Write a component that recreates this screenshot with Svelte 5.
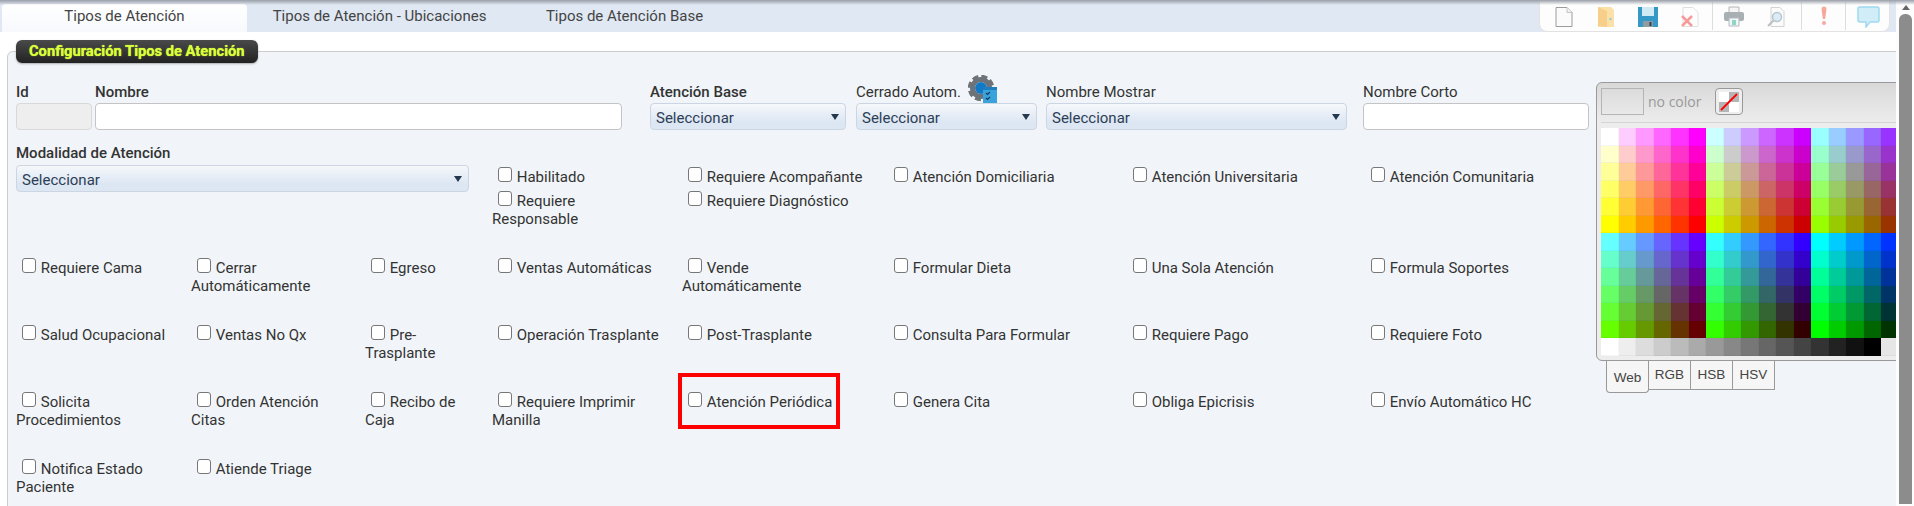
<script>
	const tabs = ['Tipos de Atención', 'Tipos de Atención - Ubicaciones', 'Tipos de Atención Base'];

	// one entry per table cell; \n marks where the label breaks
	const rows = [
		['Requiere Cama', 'Cerrar\nAutomáticamente', 'Egreso', 'Ventas Automáticas', 'Vende\nAutomáticamente', 'Formular Dieta', 'Una Sola Atención', 'Formula Soportes'],
		['Salud Ocupacional', 'Ventas No Qx', 'Pre-\nTrasplante', 'Operación Trasplante', 'Post-Trasplante', 'Consulta Para Formular', 'Requiere Pago', 'Requiere Foto'],
		['Solicita\nProcedimientos', 'Orden Atención\nCitas', 'Recibo de\nCaja', 'Requiere Imprimir\nManilla', 'Atención Periódica', 'Genera Cita', 'Obliga Epicrisis', 'Envío Automático HC'],
		['Notifica Estado\nPaciente', 'Atiende Triage']
	];

	const firstRow = [
		['Habilitado', 'Requiere\nResponsable'],
		['Requiere Acompañante', 'Requiere Diagnóstico'],
		['Atención Domiciliaria'],
		['Atención Universitaria'],
		['Atención Comunitaria']
	];

	const hex = ['ff', 'cc', '99', '66', '33', '00'];
	const swatches = [];
	for (const reds of [['ff', 'cc', '99'], ['66', '33', '00']]) {
		for (const b of hex) {
			for (const r of reds) {
				for (const g of hex) swatches.push('#' + r + g + b);
			}
		}
	}
	const grays = ['#ffffff', '#eeeeee', '#dddddd', '#cccccc', '#bbbbbb', '#aaaaaa', '#999999', '#888888', '#777777', '#666666', '#555555', '#444444', '#333333', '#222222', '#111111', '#000000', '#e6e6e6', '#e6e6e6'];
</script>

{#snippet check(text)}
	<label class="check" class:marked={text === 'Atención Periódica'}><input type="checkbox" /> {text}</label>
{/snippet}

{#snippet dropdown()}
	<div class="select"><span>Seleccionar</span></div>
{/snippet}

<div class="page">
	<div class="content">
		<div class="topbar">
			<div class="tabs">
				{#each tabs as tab, i}
					<div class="tab" class:active={i === 0}>{tab}</div>
				{/each}
			</div>
			<div class="toolbar">
				<span class="tool">
					<svg width="24" height="24" viewBox="0 0 24 24"><path d="M4 3.500h11l5 5v14H4z" fill="#fbfbfb" stroke="#8a8a8a" /><path d="M15 3.500v5h5" fill="#eee" stroke="#bbb" /></svg>
				</span>
				<span class="tool">
					<svg width="24" height="24" viewBox="0 0 24 24"><path d="M4 3h13l3 3v17H4z" fill="#fbdc9a" /><path d="M4 3l9 4v16l-9-1z" fill="#f6c877" /><circle cx="16.500" cy="15" r="1.300" fill="#8fc6c9" /></svg>
				</span>
				<span class="tool">
					<svg width="24" height="24" viewBox="0 0 24 24"><path d="M2 3h20v20H2z" fill="#1487bd" /><path d="M6 3h12v9H6z" fill="#c9e9f2" /><path d="M7 17h10v6H7z" fill="#7d8a93" /><path d="M13.500 18h2v4h-2z" fill="#123" /></svg>
				</span>
				<span class="tool">
					<svg width="24" height="24" viewBox="0 0 24 24"><path d="M5 3.500h10l5 5v14H5z" fill="#fdfdfd" stroke="#ddd" /><path d="M4 12l10 10M14 12L4 22" stroke="#f58a8a" stroke-width="2.500" /></svg>
				</span>
				<span class="sep"></span>
				<span class="tool">
					<svg width="24" height="24" viewBox="0 0 24 24"><path d="M7 3h10v6H7z" fill="#f4f4f4" stroke="#aaa" /><rect x="2" y="8" width="20" height="9" rx="2" fill="#9aa3a8" /><path d="M7 14h10v8H7z" fill="#eef6f6" stroke="#aab" /><path d="M10 16h4v5h-4z" fill="#7ecdb8" /></svg>
				</span>
				<span class="tool">
					<svg width="24" height="24" viewBox="0 0 24 24"><path d="M7 3.500h9l4 4v15H7z" fill="#fbfbfb" stroke="#ccc" /><circle cx="13" cy="13" r="4.500" fill="#d6eaf5" stroke="#a9bcc6" stroke-width="1.500" /><path d="M9.500 16.500L4 22" stroke="#b5b5b5" stroke-width="2" /></svg>
				</span>
				<span class="sep wide"></span>
				<span class="tool">
					<svg width="24" height="24" viewBox="0 0 24 24"><path d="M9.500 5a2.500 2.500 0 0 1 5 0L13.200 15h-2.400z" fill="#f69a8c" /><circle cx="12" cy="19" r="2" fill="#f69a8c" /></svg>
				</span>
				<span class="sep narrow"></span>
				<span class="tool">
					<svg width="24" height="24" viewBox="0 0 24 24"><path d="M4 3h17a2 2 0 0 1 2 2v11a2 2 0 0 1-2 2h-7l-4 5v-5H4a2 2 0 0 1-2-2V5a2 2 0 0 1 2-2z" fill="#c9ebf8" stroke="#8fd3ec" stroke-width="1.500" /></svg>
				</span>
			</div>
		</div>

		<fieldset class="panel">
			<legend>Configuración Tipos de Atención</legend>
			<div class="panel-body">
				<div class="form">
					<div class="fields">
						<div class="field id"><b>Id</b><input disabled /></div>
						<div class="field name"><b>Nombre</b><input /></div>
						<div class="field base"><b>Atención Base</b>{@render dropdown()}</div>
						<div class="field closed">
							<span class="with-icon">Cerrado Autom.
								<svg class="gear" width="30" height="28" viewBox="0 0 30 28">
									<circle cx="13" cy="13" r="8.500" fill="none" stroke="#6d7379" stroke-width="5" />
									<circle cx="13" cy="13" r="11.500" fill="none" stroke="#6d7379" stroke-width="3.500" stroke-dasharray="6 3.030" />
									<circle cx="13" cy="13" r="6" fill="#1479c4" />
									<rect x="15" y="12" width="14" height="16" fill="#3aa3dc" />
									<rect x="15" y="12" width="14" height="3" fill="#1e7fbf" />
									<path d="M18 18l1.500 1.500 2.500-2.500M18 23l1.500 1.500 2.500-2.500" stroke="#123a5c" stroke-width="1.200" fill="none" />
								</svg>
							</span>
							{@render dropdown()}
						</div>
						<div class="field shown"><span>Nombre Mostrar</span>{@render dropdown()}</div>
						<div class="field short"><span>Nombre Corto</span><input /></div>
					</div>

					<div class="grid">
						<div class="cell modality">
							<b>Modalidad de Atención</b>
							{@render dropdown()}
						</div>
						{#each firstRow as group}
							<div class="cell stacked">
								{#each group as text}
									{@render check(text)}
								{/each}
							</div>
						{/each}
						{#each rows as row}
							{#each row as text}
								<div class="cell">{@render check(text)}</div>
							{/each}
						{/each}
					</div>
				</div>

				<div class="picker">
					<div class="picker-box">
						<div class="picker-head">
							<span class="current"></span>
							<span class="no-color">no color</span>
							<span class="clear">
								<svg width="20" height="20" viewBox="0 0 20 20">
									<rect width="20" height="20" fill="#fff" />
									<rect x="10" width="10" height="10" fill="#b5b5b5" />
									<rect y="10" width="10" height="10" fill="#b5b5b5" />
									<path d="M2 18L18 2" stroke="#f00" stroke-width="1.800" />
								</svg>
							</span>
						</div>
						<div class="swatches">
							{#each swatches as color}
								<span style="background: {color}"></span>
							{/each}
							{#each grays as color}
								<span style="background: {color}"></span>
							{/each}
						</div>
					</div>
					<div class="picker-tabs">
						<span class="active">Web</span>
						<span>RGB</span>
						<span>HSB</span>
						<span>HSV</span>
					</div>
				</div>
			</div>
		</fieldset>
	</div>

	<div class="scrollbar">
		<i></i>
		<div class="thumb"></div>
	</div>
	<div class="top-shadow"></div>
</div>

<style>
	:global(body) {
		margin: 0;
		background: #fff;
	}

	.page {
		display: flex;
		position: relative;
		height: 506px;
		overflow: hidden;
		font-family: Roboto, 'Liberation Sans', sans-serif;
		font-size: 15px;
		line-height: 18px;
		color: #333;
	}

	.top-shadow {
		position: absolute;
		left: 0;
		right: 0;
		top: 0;
		height: 5px;
		background: linear-gradient(#9a9fa8, rgba(170, 175, 185, 0));
	}

	.content {
		flex: 1;
		min-width: 0;
		overflow: hidden;
	}

	.topbar {
		display: flex;
		justify-content: space-between;
		height: 32px;
		background: #dfe8f3;
		padding-right: 6px;
	}

	.tabs {
		display: flex;
		padding: 4px 0 0 2px;
	}

	.tab {
		display: flex;
		align-items: center;
		justify-content: center;
		color: #444;
		width: 245px;
		padding-bottom: 4px;
	}

	.tab:nth-child(2) {
		width: 265px;
	}

	.tab:nth-child(3) {
		width: 225px;
	}

	.tab.active {
		background: linear-gradient(#fff, #f7f9fc);
		border-radius: 4px 4px 0 0;
	}

	.toolbar {
		display: flex;
		align-items: center;
		width: 351px;
		box-sizing: border-box;
		padding-left: 3px;
		background: #fdfdfd;
		border: 1px solid #e2e2e2;
		border-top: none;
		border-radius: 0 0 8px 8px;
	}

	.tool {
		display: flex;
		justify-content: center;
		width: 42px;
		opacity: 0.85;
		filter: blur(0.4px);
	}

	.sep {
		width: 1px;
		height: 28px;
		margin: 0 1px;
		background: #ddd;
	}

	.sep.wide {
		margin-left: 4px;
	}

	.sep.narrow {
		margin-left: 0;
	}

	.panel {
		margin: 8px -10px 0 7px;
		padding: 0 0 0 8px;
		min-width: 0;
		border: 1px solid #ccc;
		border-radius: 6px 0 0 0;
		background: #f1f5f9;
	}

	legend {
		box-sizing: border-box;
		height: 23px;
		width: 242px;
		padding: 0 0 0 13px;
		margin: 0 auto 0 0;
		text-align: left;
		font-size: 14.700px;
		font-weight: 700;
		line-height: 23px;
		white-space: nowrap;
		color: #d8ff3a;
		text-shadow: 0 0 1px #d8ff3a;
		background: linear-gradient(#4a4a4a, #222);
		border-radius: 6px;
		box-shadow: 0 1px 2px rgba(0, 0, 0, 0.3);
	}

	.panel-body {
		display: flex;
		padding-top: 20px;
	}

	.form {
		flex: none;
		width: 1573px;
	}

	.fields {
		display: flex;
	}

	.field {
		display: flex;
		flex-direction: column;
		justify-content: flex-end;
		gap: 2px;
	}

	b {
		font-weight: 500;
	}

	.id {
		width: 76px;
	}

	.name {
		width: 527px;
		margin-left: 3px;
	}

	.base {
		width: 196px;
		margin-left: 28px;
	}

	.closed {
		width: 181px;
		margin-left: 10px;
	}

	.shown {
		width: 301px;
		margin-left: 9px;
	}

	.short {
		width: 226px;
		margin-left: 16px;
	}

	.with-icon {
		display: block;
		height: 18px;
		white-space: nowrap;
	}

	.gear {
		vertical-align: top;
		margin: -8px 0 0 3px;
	}

	input:not([type]) {
		box-sizing: border-box;
		height: 27px;
		width: 100%;
		margin: 0;
		background: #fff;
		border: 1px solid #c4c4c4;
		border-radius: 4px;
	}

	input:disabled {
		background: #eee;
		border-color: #d8d8d8;
	}

	.select {
		position: relative;
		box-sizing: border-box;
		height: 27px;
		padding: 1px 5px 0;
		line-height: 26px;
		color: #2c3e55;
		background: linear-gradient(#f6f8fb, #dde7f3 70%);
		border: 1px solid #ccd6e2;
		border-radius: 4px;
	}

	.select::after {
		content: '';
		position: absolute;
		right: 6px;
		top: 10px;
		border: 4.500px solid transparent;
		border-top: 6px solid #24384f;
		border-bottom: none;
	}

	.grid {
		display: grid;
		grid-template-columns: 175px 174px 127px 190px 206px 239px 238px 224px;
		grid-template-rows: 115px repeat(4, 67px);
		margin-top: 14px;
	}

	.cell {
		display: flex;
		flex-direction: column;
		align-items: flex-start;
	}

	.modality {
		grid-column: span 3;
		padding-right: 23px;
		gap: 3px;
	}

	.modality .select {
		align-self: stretch;
	}

	.stacked {
		padding-top: 24px;
		gap: 6px;
	}

	.check {
		position: relative;
		white-space: pre-line;
		color: #333;
	}

	.check input {
		appearance: none;
		box-sizing: border-box;
		width: 14px;
		height: 15px;
		margin: -4px 1px 0 6px;
		vertical-align: 0;
		background: #fff;
		border: 1px solid #777;
		border-radius: 3px;
	}

	.marked::after {
		content: '';
		position: absolute;
		left: -4px;
		top: -20px;
		width: 162px;
		height: 56px;
		box-sizing: border-box;
		border: 4px solid #f00;
	}

	.picker {
		flex: none;
		margin: -1px 0 0 7px;
		width: 330px;
	}

	.picker-box {
		box-sizing: border-box;
		height: 279px;
		padding: 5px 0 0 4px;
		background: linear-gradient(#d9d9d9, #ededed 40px);
		border: 1.500px solid #999;
		border-radius: 6px;
	}

	.picker-head {
		display: flex;
		align-items: center;
		height: 35px;
		border-bottom: 1px solid #d4d4d4;
		box-sizing: border-box;
		padding-bottom: 7px;
	}

	.current {
		box-sizing: border-box;
		width: 43px;
		height: 27px;
		border: 1px solid #b5b5b5;
	}

	.no-color {
		margin-left: 4px;
		width: 67px;
		font-family: 'Open Sans', sans-serif;
		font-size: 14px;
		color: #999;
	}

	.clear {
		box-sizing: border-box;
		display: flex;
		align-items: center;
		justify-content: center;
		width: 28px;
		height: 27px;
		background: #eee;
		border: 1px solid #999;
		border-radius: 4px;
	}

	.swatches {
		display: grid;
		grid-template-columns: repeat(18, 17.500px);
		grid-auto-rows: 17.500px;
		margin-top: 5px;
	}

	.swatches span {
		box-shadow: inset -1px -1px 0 rgba(0, 0, 0, 0.04);
	}

	.picker-tabs {
		display: flex;
		align-items: flex-start;
		margin-left: 10px;
		font-family: 'Liberation Sans', sans-serif;
		font-size: 13.500px;
		color: #444;
	}

	.picker-tabs span {
		box-sizing: border-box;
		width: 43px;
		height: 29px;
		margin-right: -1px;
		padding-top: 5px;
		text-align: center;
		background: #f6f6f6;
		border: 1px solid #999;
		border-top: none;
	}

	.picker-tabs .active {
		height: 32px;
		padding-top: 8px;
		border-radius: 0 0 4px 4px;
	}

	.scrollbar {
		flex: none;
		width: 18px;
		padding-left: 3px;
		box-sizing: border-box;
		background: #fdfdfd;
	}

	.scrollbar i {
		display: block;
		width: 0;
		margin: 5px 0 0 3px;
		border: 4px solid transparent;
		border-bottom: 5px solid #666;
		border-top: none;
	}

	.thumb {
		width: 13px;
		height: 490px;
		margin-top: 4px;
		background: #8c8c8c;
		border-radius: 6px 6px 0 0;
	}
</style>
